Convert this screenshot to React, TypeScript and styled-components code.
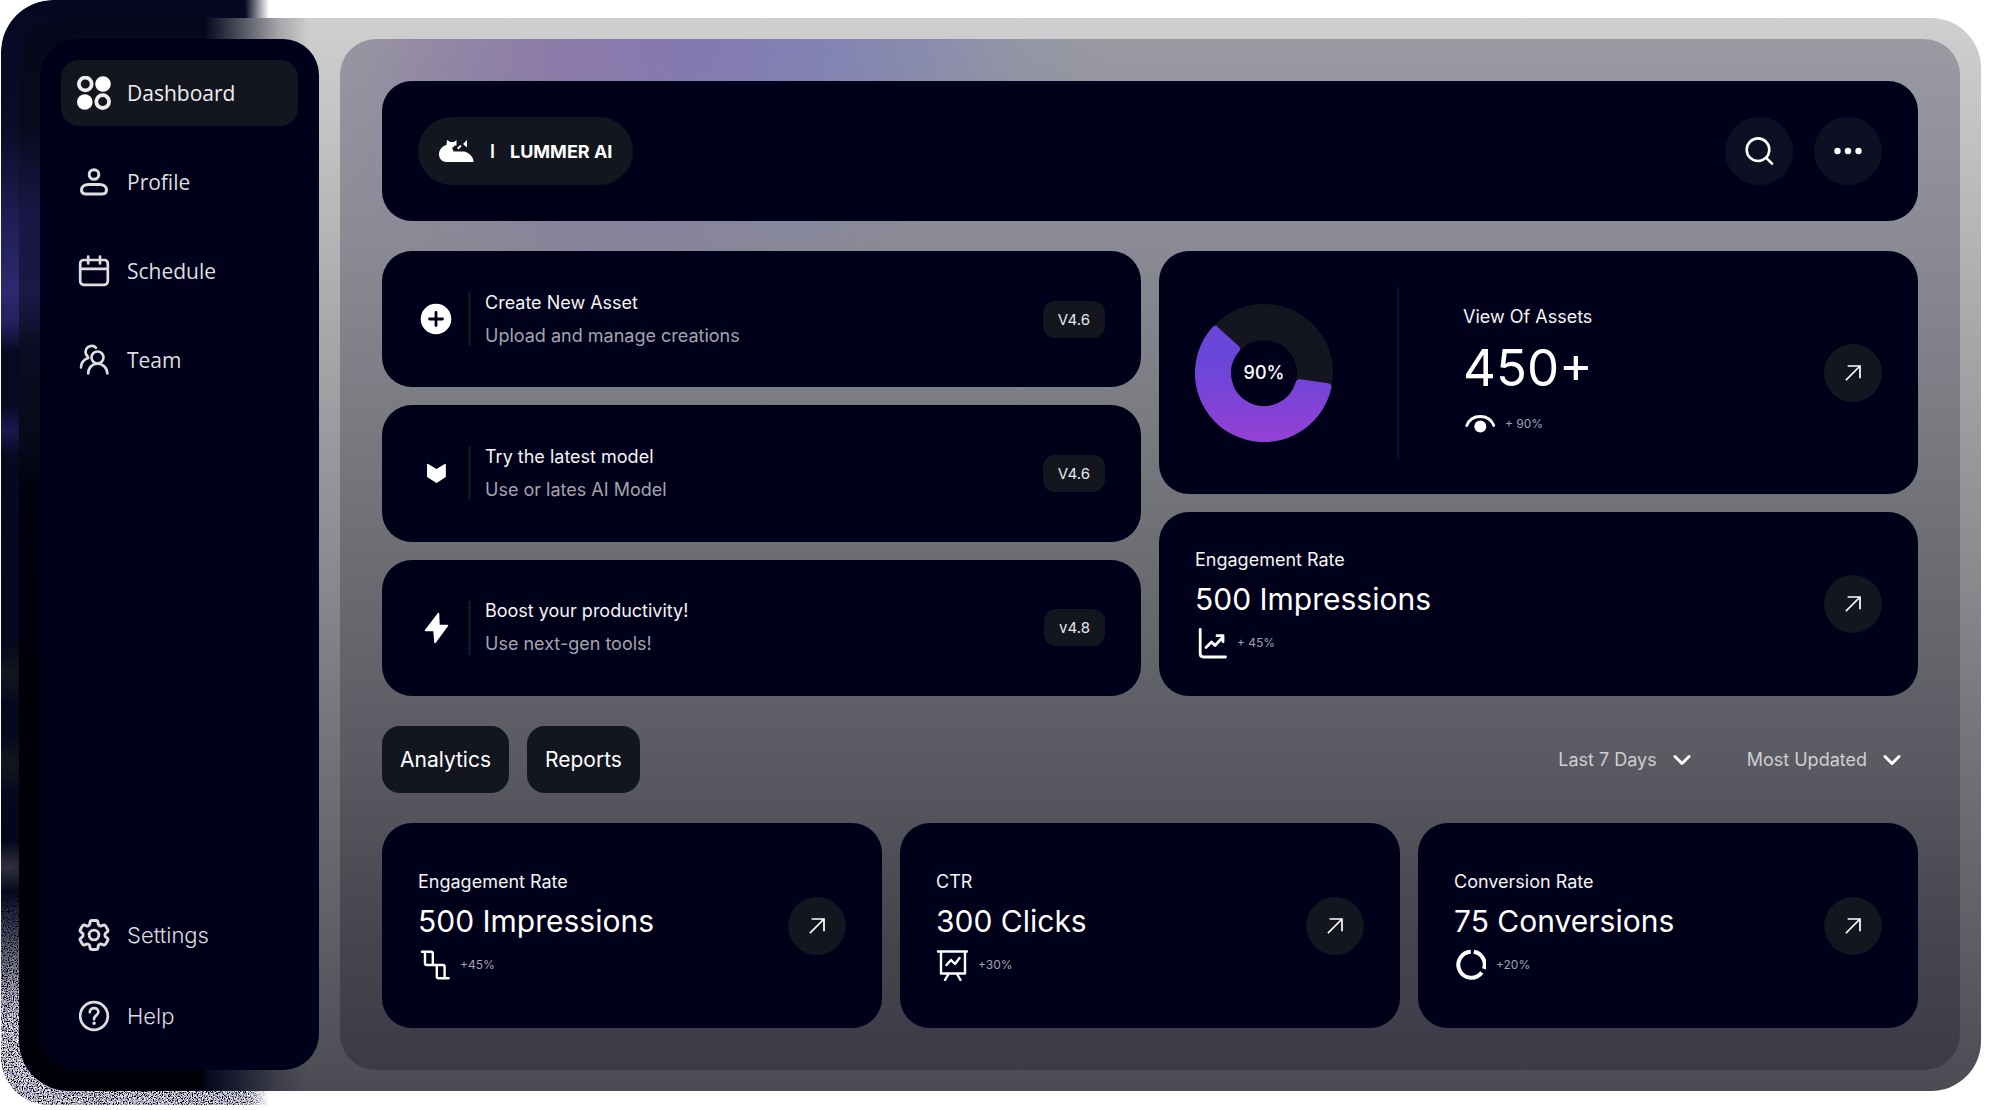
import React from 'react';
import styled, { createGlobalStyle } from 'styled-components';
import { HiOutlineCog6Tooth } from 'react-icons/hi2';

const GlobalStyle = createGlobalStyle`
  *, *::before, *::after { box-sizing: border-box; }
  body { margin: 0; background: #fff; font-family: Inter, 'Liberation Sans', sans-serif; color: #fff; }
  button, select { font: inherit; color: inherit; border: 0; }
  button { cursor: pointer; padding: 0; }
  svg { display: block; flex: none; }
  h2, p { margin: 0; font-weight: 400; }
`;

const color = { card: '#00001a', chip: '#13151f', line: '#11131d', muted: '#a3a4aa' };

const Stage = styled.div`
  position: relative;
  display: flex;
  min-height: 100vh;
  padding: 18px 19px 19px;
`;

const Backdrop = styled.div`
  position: absolute;
  inset: 0 auto 5px 1px;
  width: 268px;
  border-radius: 52px 0 0 48px;
  overflow: hidden;
  background:
    radial-gradient(ellipse 60px 26px at 6px 430px, #1a1850, transparent),
    radial-gradient(ellipse 60px 30px at 6px 674px, #14171f, transparent),
    radial-gradient(ellipse 60px 30px at 6px 764px, #14171f, transparent),
    radial-gradient(ellipse 60px 26px at 6px 867px, #30303f, transparent),
    linear-gradient(#060822 0, #0a0c28 130px, #1f1d55 220px, #2c296f 290px, #221f5c 325px, #070920 352px, #04051b 100%);
  mask-image: linear-gradient(to right, #000 244px, transparent 268px);
`;

const Grain = styled.svg`
  position: absolute;
  left: 0;
  bottom: 0;
  width: 100%;
  height: 215px;
  mask-image: linear-gradient(transparent, #000 130px);
`;

const Frame = styled.div`
  position: relative;
  flex: 1;
  display: flex;
  gap: 21px;
  padding: 21px;
  border-radius: 50px;
  background:
    linear-gradient(#05081a 0, #080a1e 110px, #1a1542 190px, #1c1745 280px, #0a0c22 330px, #060919 430px, #00000c 480px, #00000a 100%) 0 0 / 185px 100% no-repeat,
    linear-gradient(to right, #03051a 185px, rgba(5, 8, 30, 0.7) 215px, rgba(5, 8, 30, 0.2) 260px, transparent 290px),
    linear-gradient(#cfcfcf 0, #c6c6c6 8%, #a3a4a6 32%, #8c8c91 50%, #75757b 66%, #605f66 85%, #4b4b54 100%);
`;

const Sidebar = styled.nav`
  flex: none;
  width: 279px;
  display: flex;
  flex-direction: column;
  justify-content: space-between;
  padding: 21px;
  border-radius: 36px;
  background: ${color.card};
`;

const NavGroup = styled.div<{ $gap: number }>`
  display: flex;
  flex-direction: column;
  gap: ${p => p.$gap}px;
`;

const NavItem = styled.a<{ $active?: boolean; $light?: boolean }>`
  display: flex;
  align-items: center;
  gap: 16px;
  height: 66px;
  padding: 0 16px;
  border-radius: 18px;
  background: ${p => (p.$active ? color.chip : 'transparent')};
  color: ${p => (p.$active ? '#eeeeef' : '#dededf')};
  font: ${p => (p.$light ? 300 : 400)} ${p => (p.$light ? 22 : 21)}px/28px ${p => (p.$light ? 'Inter' : "'Open Sans'")}, sans-serif;
  text-decoration: none;
`;

const Main = styled.main`
  flex: 1;
  min-width: 0;
  display: flex;
  flex-direction: column;
  gap: 30px;
  padding: 42px;
  border-radius: 36px;
  background:
    radial-gradient(ellipse 260px 260px at 220px 20px, rgba(140, 108, 164, 0.5), transparent),
    radial-gradient(ellipse 330px 260px at 350px 0, rgba(120, 112, 188, 0.65), transparent),
    radial-gradient(ellipse 300px 220px at 480px 0, rgba(116, 130, 190, 0.45), transparent),
    linear-gradient(#9a9aa2 0, #8a8a94 20%, #7b7b82 36%, #696970 54%, #5a5a62 70%, #46454f 87%, #3b3a47 100%);
`;

const Card = styled.section<{ $pad: string }>`
  display: flex;
  align-items: center;
  justify-content: space-between;
  padding: ${p => p.$pad};
  border-radius: 30px;
  background: ${color.card};
`;

const Brand = styled.div`
  display: flex;
  align-items: center;
  height: 68px;
  padding: 0 21px;
  border-radius: 34px;
  background: ${color.chip};
  font-size: 18px;
  font-weight: 700;
`;
const BrandMark = styled.span`
  margin: 0 15px;
  font-weight: 600;
`;

const Row = styled.div<{ $gap: number }>`
  display: flex;
  align-items: center;
  gap: ${p => p.$gap}px;
`;

const RoundButton = styled.button<{ $size: number; $bg: string }>`
  flex: none;
  display: grid;
  place-items: center;
  width: ${p => p.$size}px;
  height: ${p => p.$size}px;
  border-radius: 50%;
  background: ${p => p.$bg};
`;

const Columns = styled.div<{ $count: number; $grow?: boolean }>`
  flex: ${p => (p.$grow ? '1 0 auto' : 'none')};
  display: grid;
  grid-template-columns: repeat(${p => p.$count}, minmax(0, 1fr));
  gap: 18px;
`;
const Stack = styled.div`
  display: flex;
  flex-direction: column;
  gap: 18px;
  & > * { flex: 1 0 auto; }
`;

const Rule = styled.span<{ $w: number; $h: number }>`
  flex: none;
  width: ${p => p.$w}px;
  height: ${p => p.$h}px;
  background: ${color.line};
`;
const ActionText = styled.div`
  display: grid;
  gap: 11px;
`;
const Title = styled.h2`
  font-size: 18px;
  line-height: 22px;
  color: #f4f4f5;
`;
const Note = styled.p`
  font-size: 18px;
  line-height: 22px;
  color: ${color.muted};
`;
const Badge = styled.span`
  padding: 9px 15px;
  border-radius: 12px;
  background: ${color.chip};
  font-size: 15px;
  line-height: 19px;
  color: #e8e8ea;
`;

const Donut = styled.div`
  display: grid;
  place-items: center;
  & > * { grid-area: 1 / 1; }
`;
const DonutLabel = styled.span`
  font-size: 18px;
  font-weight: 500;
`;

const Metric = styled.div`
  display: grid;
  gap: 8px;
`;
const Value = styled.p<{ $large?: boolean }>`
  font-size: ${p => (p.$large ? 51 : 30)}px;
  line-height: ${p => (p.$large ? 64 : 40)}px;
`;
const Delta = styled.span`
  font-size: 12px;
  line-height: 16px;
  color: ${color.muted};
`;

const Toolbar = styled.div`
  display: flex;
  justify-content: space-between;
`;
const Tab = styled.button`
  height: 67px;
  padding: 0 18px;
  border-radius: 18px;
  background: ${color.chip};
  font-size: 21px;
`;
const Filter = styled.label`
  display: grid;
  align-items: center;
  justify-items: end;
  & > * { grid-area: 1 / 1; }
  & > svg { pointer-events: none; }
`;
const Select = styled.select`
  appearance: none;
  field-sizing: content;
  padding: 0 34px 0 0;
  background: transparent;
  color: #cfcfd2;
  font-size: 18px;
  line-height: 24px;
  cursor: pointer;
  option { color: #111; }
`;
const Filters = styled(Row)`
  padding-right: 17px;
`;

const Icon = ({ size = 34, box = 34, w = 2.4, children }: { size?: number; box?: number; w?: number; children: React.ReactNode }) => (
  <svg width={size} height={size} viewBox={`0 0 ${box} ${box}`} fill="none" stroke="currentColor" strokeWidth={w} strokeLinecap="round" strokeLinejoin="round" aria-hidden="true">
    {children}
  </svg>
);

const DashboardIcon = () => (
  <Icon w={3.8}>
    <circle cx="8.3" cy="8" r="6.4" />
    <circle cx="26" cy="8" r="7.8" fill="#fff" stroke="none" />
    <circle cx="7.8" cy="26" r="7.8" fill="#fff" stroke="none" />
    <circle cx="25.7" cy="25.6" r="6.4" />
  </Icon>
);
const ProfileIcon = () => (
  <Icon w={3}>
    <circle cx="17" cy="9.5" r="4.8" />
    <path d="M11.5 19.5h11c4 0 7 2 7 5.3 0 2.7-1.8 4.2-4 4.2h-17c-2.200 0-4-1.500-4-4.200 0-3.300 3-5.300 7-5.300z" />
  </Icon>
);
const CalendarIcon = () => (
  <Icon w={2.7}>
    <rect x="3.200" y="6" width="27.600" height="24.800" rx="3.500" />
    <path d="M3.200 14.800h27.600M11.200 2.500v7M23 2.500v7" />
  </Icon>
);
const TeamIcon = () => (
  <Icon w={2.6}>
    <circle cx="20.500" cy="14.500" r="6" />
    <path d="M11.200 30.500c0-5.600 4-9.800 9.300-9.800s9.800 4.200 9.800 9.800M19 4.800C17.500 3 15 2.500 12.800 3.200 8.500 4.500 7 10 10.500 13.200L11.300 15C7 16.500 4 20 4 24.500" />
  </Icon>
);
const HelpIcon = () => (
  <Icon w={2.7}>
    <circle cx="17" cy="17" r="13.800" />
    <path d="M12.800 13.200c0-2.500 1.900-4 4.300-4s4.300 1.500 4.300 3.900c0 3.200-4.300 3.400-4.300 6.500v.6" />
    <circle cx="17.100" cy="24.200" r="1" fill="currentColor" strokeWidth="1.500" />
  </Icon>
);
const CatIcon = () => (
  <svg width="36" height="36" viewBox="0 0 36 36" fill="#fff" aria-hidden="true">
    <path d="M8 7l3.500 2h3.500L17.500 7v5.500l-4.500 2 1.500 4h11c5 1.500 8.800 5.500 9 9.800V29H7.500C3.500 29 0 26 0 21.500 0 17 3 13 7.500 12z" />
    <path d="M12.500 13.200l1.500 1.500 .6-1.800zM18 15l3.500-3.200 1 1.600-3 3zM24 11l4-4v7.500z" />
    <path d="M15 12.500l3 .500-2.200 3.500z" fill={color.chip} />
  </svg>
);
const PlusCircleIcon = () => (
  <Icon size={36} box={36} w={2.800}>
    <circle cx="18" cy="18" r="15.300" fill="#fff" stroke="none" />
    <path d="M18 11.500v13M11.500 18h13" stroke={color.card} />
  </Icon>
);
const ModelIcon = () => (
  <Icon size={36} box={36} w={1.500}>
    <path d="M9.800 9.600L18.500 14.800l8.600-5.200v12L18.500 27.200l-8.700-5.600z" fill="#fff" />
  </Icon>
);
const BoltIcon = () => (
  <Icon size={36} box={36} w={1.500}>
    <path d="M20.500 3.500L7.500 20.500h8.500L17 32.500 29.500 15.500h-8.500z" fill="#fff" />
  </Icon>
);
const EyeIcon = () => (
  <Icon size={32} box={32} w={2.800}>
    <path d="M3.800 17.500C6 12 10.500 8.500 17.300 8.500s11.300 3.500 13.500 9" />
    <circle cx="17.300" cy="18.500" r="6" fill="#fff" stroke="none" />
  </Icon>
);
const TrendIcon = () => (
  <Icon size={32} box={32} w={2.800}>
    <path d="M5.200 2.500v24q0 3.500 3.500 3.500H30.500M11 20.500l5.500-5.500 3.500 3.500 7.500-8M22 8.700h6v6" />
  </Icon>
);
const StepsIcon = () => (
  <Icon size={32} box={32} w={2.400}>
    <path d="M4 2.700h9q1.800 0 1.800 1.800v11.500h10q1.800 0 1.800 1.800v11.500h4M7 2.700v11.500q0 1.800 1.800 1.800h6M18.800 16v11.500q0 1.800 1.800 1.800h6" />
  </Icon>
);
const BoardIcon = () => (
  <Icon size={32} box={32} w={2.400}>
    <path d="M2 2.500h29M5 2.500v22h24V2.500M12.500 25l-3.500 6M21 25l3.500 6M10.500 16l4.500-5 4 4 4.500-6" />
  </Icon>
);
const RingIcon = () => (
  <Icon size={32} box={32} w={4}>
    <g strokeLinecap="butt">
      <path d="M19.800 2.800A13 13 0 0 1 30 19.900M27.800 23.500A13 13 0 1 1 16.800 2.800" />
    </g>
  </Icon>
);
const ArrowIcon = () => (
  <Icon size={18} box={18} w={1.700}>
    <path d="M2.500 15.500L15.500 2.500M4.500 2h11.500v11.500" strokeLinecap="square" strokeLinejoin="miter" />
  </Icon>
);
const ChevronIcon = () => (
  <Icon size={18} box={18} w={3}>
    <path d="M2 5.500l7 7 7-7" />
  </Icon>
);

const ArrowButton = ({ label }: { label: string }) => (
  <RoundButton type="button" $size={58} $bg={color.chip} aria-label={label}>
    <ArrowIcon />
  </RoundButton>
);

const primaryNav = [
  { label: 'Dashboard', icon: <DashboardIcon />, active: true },
  { label: 'Profile', icon: <ProfileIcon /> },
  { label: 'Schedule', icon: <CalendarIcon /> },
  { label: 'Team', icon: <TeamIcon /> },
];
const secondaryNav = [
  { label: 'Settings', icon: <HiOutlineCog6Tooth size={34} viewBox="1.500 1.500 21 21" strokeWidth={1.8} /> },
  { label: 'Help', icon: <HelpIcon /> },
];
const actions = [
  { title: 'Create New Asset', note: 'Upload and manage creations', version: 'V4.6', icon: <PlusCircleIcon /> },
  { title: 'Try the latest model', note: 'Use or lates AI Model', version: 'V4.6', icon: <ModelIcon /> },
  { title: 'Boost your productivity!', note: 'Use next-gen tools!', version: 'v4.8', icon: <BoltIcon /> },
];
const stats = [
  { title: 'Engagement Rate', value: '500 Impressions', delta: '+45%', icon: <StepsIcon /> },
  { title: 'CTR', value: '300 Clicks', delta: '+30%', icon: <BoardIcon /> },
  { title: 'Conversion Rate', value: '75 Conversions', delta: '+20%', icon: <RingIcon /> },
];

type MetricProps = { title: string; value: string; delta: string; icon: React.ReactNode; large?: boolean };
const MetricBlock = ({ title, value, delta, icon, large }: MetricProps) => (
  <Metric>
    <Title>{title}</Title>
    <Value $large={large}>{value}</Value>
    <Row $gap={10}>
      {icon}
      <Delta>{delta}</Delta>
    </Row>
  </Metric>
);

const FilterSelect = ({ label, value }: { label: string; value: string }) => (
  <Filter>
    <Select aria-label={label} defaultValue={value}>
      <option>{value}</option>
    </Select>
    <ChevronIcon />
  </Filter>
);

export default function App() {
  return (
    <>
      <GlobalStyle />
      <Stage>
        <Backdrop>
          <Grain aria-hidden="true">
            <filter id="grain" x="0" y="0" width="100%" height="100%">
              <feTurbulence type="fractalNoise" baseFrequency="0.8" numOctaves="2" seed="4" />
              <feColorMatrix values="3 0 0 0 -1.1  3 0 0 0 -1.1  3 0 0 0 -1.02  0 0 0 0 1" />
            </filter>
            <rect width="100%" height="100%" filter="url(#grain)" />
          </Grain>
        </Backdrop>
        <Frame>
          <Sidebar aria-label="Main">
            <NavGroup $gap={23}>
              {primaryNav.map(n => (
                <NavItem key={n.label} href="#" $active={n.active}>
                  {n.icon}
                  {n.label}
                </NavItem>
              ))}
            </NavGroup>
            <NavGroup $gap={15}>
              {secondaryNav.map(n => (
                <NavItem key={n.label} href="#" $light>
                  {n.icon}
                  {n.label}
                </NavItem>
              ))}
            </NavGroup>
          </Sidebar>
          <Main>
            <Card as="header" $pad="36px">
              <Brand>
                <CatIcon />
                <BrandMark>I</BrandMark>
                LUMMER AI
              </Brand>
              <Row $gap={21}>
                <RoundButton type="button" $size={68} $bg="#0d0f23" aria-label="Search">
                  <Icon w={2.600}>
                    <circle cx="16" cy="15.700" r="11.300" />
                    <path d="M24 23.700l6 6" />
                  </Icon>
                </RoundButton>
                <RoundButton type="button" $size={68} $bg="#0d0f23" aria-label="More">
                  <svg width="34" height="34" viewBox="0 0 34 34" fill="#fff" aria-hidden="true">
                    <circle cx="6.500" cy="17" r="3.200" />
                    <circle cx="17" cy="17" r="3.200" />
                    <circle cx="27.500" cy="17" r="3.200" />
                  </svg>
                </RoundButton>
              </Row>
            </Card>

            <Columns $count={2}>
              <Stack>
                {actions.map(a => (
                  <Card key={a.title} $pad="36px">
                    <Row $gap={14}>
                      {a.icon}
                      <Rule $w={3} $h={54} />
                      <ActionText>
                        <Title>{a.title}</Title>
                        <Note>{a.note}</Note>
                      </ActionText>
                    </Row>
                    <Badge>{a.version}</Badge>
                  </Card>
                ))}
              </Stack>
              <Stack>
                <Card $pad="36px">
                  <Row $gap={64}>
                    <Donut>
                      <svg width="138" height="138" viewBox="0 0 138 138" aria-hidden="true">
                        <defs>
                          <linearGradient id="ring" x1="0" y1="0" x2="0" y2="1">
                            <stop offset="0.3" stopColor="#6946d8" />
                            <stop offset="1" stopColor="#9340d5" />
                          </linearGradient>
                        </defs>
                        <circle cx="69" cy="69" r="51" fill="none" stroke={color.chip} strokeWidth="36" />
                        <path
                          d="M132.400 83.200A65 65 0 1 1 20.200 26.100L41 45A37 37 0 1 0 104.600 79.300z"
                          fill="url(#ring)"
                          stroke="url(#ring)"
                          strokeWidth="8"
                          strokeLinejoin="round"
                        />
                      </svg>
                      <DonutLabel>90%</DonutLabel>
                    </Donut>
                    <Rule $w={2} $h={171} />
                    <MetricBlock large title="View Of Assets" value="450+" delta="+ 90%" icon={<EyeIcon />} />
                  </Row>
                  <ArrowButton label="Open assets" />
                </Card>
                <Card $pad="37px 36px">
                  <MetricBlock title="Engagement Rate" value="500 Impressions" delta="+ 45%" icon={<TrendIcon />} />
                  <ArrowButton label="Open engagement rate" />
                </Card>
              </Stack>
            </Columns>

            <Toolbar>
              <Row $gap={18}>
                <Tab type="button">Analytics</Tab>
                <Tab type="button">Reports</Tab>
              </Row>
              <Filters $gap={56}>
                <FilterSelect label="Period" value="Last 7 Days" />
                <FilterSelect label="Sort order" value="Most Updated" />
              </Filters>
            </Toolbar>

            <Columns $count={3} $grow>
              {stats.map(s => (
                <Card key={s.title} $pad="47px 36px">
                  <MetricBlock {...s} />
                  <ArrowButton label={`Open ${s.title}`} />
                </Card>
              ))}
            </Columns>
          </Main>
        </Frame>
      </Stage>
    </>
  );
}
